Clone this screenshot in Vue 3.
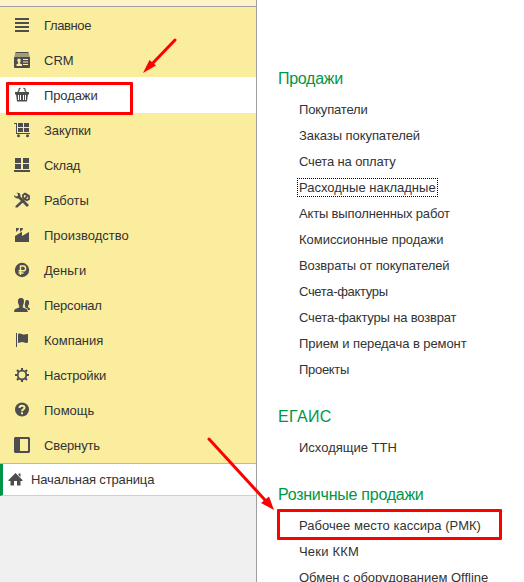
<script setup>
// track: letter spacing of each label, in px
const menu = [
  { icon: 'lines', label: 'Главное', track: -0.38 },
  { icon: 'crm', label: 'CRM', track: 0 },
  { icon: 'basket', label: 'Продажи', track: -0.1, active: true },
  { icon: 'cart', label: 'Закупки', track: -0.05 },
  { icon: 'stock', label: 'Склад', track: -0.3 },
  { icon: 'tools', label: 'Работы', track: -0.08 },
  { icon: 'factory', label: 'Производство', track: 0 },
  { icon: 'money', label: 'Деньги', track: 0.03 },
  { icon: 'people', label: 'Персонал', track: -0.25 },
  { icon: 'flag', label: 'Компания', track: -0.03 },
  { icon: 'gear', label: 'Настройки', track: -0.2 },
  { icon: 'help', label: 'Помощь', track: 0.03 },
  { icon: 'collapse', label: 'Свернуть', track: -0.13 }
]

const sections = [
  {
    title: 'Продажи',
    track: -0.28,
    items: [
      { label: 'Покупатели', track: -0.18 },
      { label: 'Заказы покупателей', track: -0.07 },
      { label: 'Счета на оплату', track: -0.15 },
      { label: 'Расходные накладные', track: 0, focused: true },
      { label: 'Акты выполненных работ', track: -0.16 },
      { label: 'Комиссионные продажи', track: -0.03 },
      { label: 'Возвраты от покупателей', track: -0.13 },
      { label: 'Счета-фактуры', track: -0.33 },
      { label: 'Счета-фактуры на возврат', track: -0.17 },
      { label: 'Прием и передача в ремонт', track: -0.07 },
      { label: 'Проекты', track: -0.3 }
    ]
  },
  { title: 'ЕГАИС', track: 0.35, items: [{ label: 'Исходящие ТТН', track: 0 }] },
  {
    title: 'Розничные продажи',
    track: -0.25,
    items: [
      { label: 'Рабочее место кассира (РМК)', track: 0.03 },
      { label: 'Чеки ККМ', track: 0.2 },
      { label: 'Обмен с оборудованием Offline', track: -0.02 }
    ]
  }
]
const spacing = (t) => ({ letterSpacing: t + 'px' })
</script>

<template>
  <div class="app">
    <aside class="side">
      <div class="strip"></div>
      <nav class="menu">
        <a v-for="m in menu" :key="m.label" class="item" :class="{ active: m.active }">
          <svg class="icon" viewBox="0 0 16 16" width="16" height="16">
            <path v-if="m.icon === 'lines'" d="M1 1h14v2H1zM1 5h14v2H1zM1 9h14v2H1zM1 13h14v2H1z" shape-rendering="crispEdges" />
            <g v-else-if="m.icon === 'crm'">
              <path d="M2 0h12l1 1v.5H1V1zM1 2.500h14l.6 1H.4zM1 4.500h14q1 0 1 1V15q0 1-1 1H1q-1 0-1-1V5.500q0-1 1-1z" />
              <path class="cut" d="M5 6.500c2.200 0 2 3 1 4v1l2 .8V14H2.500v-1.700l1.800-.8v-1c-1.200-1-1.500-4 .7-4zM9 7h5v1H9zM9 9.500h5v1H9zM9 12h5v1H9z" />
            </g>
            <g v-else-if="m.icon === 'basket'">
              <path d="M1 5h14v2.500H1zM2 7h12l-1 7.500H3z" />
              <path class="line" d="M3.500 5.500L5 3.500V2L6.500 1M12.500 5.500L11 3.500V2L9.500 1" />
              <path class="white-line" d="M4.500 8v5M6.500 8v5M9.500 8v5M11.500 8v5" />
            </g>
            <g v-else-if="m.icon === 'cart'">
              <path d="M4 1h5v4H4zM10 1h5v4h-5zM4 6h5v4H4zM10 6h5v4h-5z" shape-rendering="crispEdges" />
              <path d="M0 1h3v10h13v1H2V2H0z" shape-rendering="crispEdges" />
              <circle cx="4.500" cy="13.800" r="1.500" /><circle cx="13.500" cy="13.800" r="1.500" />
            </g>
            <path v-else-if="m.icon === 'stock'" d="M1 1h6v5H1zM9 1h6v5H9zM1 7h6v5H1zM9 7h6v5H9zM0 13h16v2H0z" shape-rendering="crispEdges" />
            <g v-else-if="m.icon === 'tools'">
              <path d="M0 3l2 1.500L3.800 4 4 2 2.500 1C5-.2 7 2 6.400 4.400L15 13l-2 2-8.500-8.600C2.500 7 0 5.500 0 3z" />
              <path d="M1.500 14L9 7l1.700 1.700L3.500 15.500H1.500z" />
              <path class="line thick" d="M9 5.500V3L11 1.500l1.800 1L15 4v3l-2 1.200-3-1.200zM12.500 2v3.200l-2 1.500" />
            </g>
            <path v-else-if="m.icon === 'factory'" d="M2 1h2.800v1.500L2 5zM6 1h2.800v1.500L6 5zM1 15V9l7-4.300V9l7-4v10z" />
            <g v-else-if="m.icon === 'money'">
              <circle cx="8" cy="8" r="7.200" />
              <path class="cut-line" d="M6.500 13V4h2.800q2.300 0 2.300 2.400T9.300 8.800H4.500M4.500 11h5" />
            </g>
            <g v-else-if="m.icon === 'people'">
              <path d="M7 1c3 0 3.300 2.500 2.800 5L8.800 9v1.500l4 1.600L14 15H0l.7-2.800L5.200 10.500V9L4.100 6C3.600 3.500 4 1 7 1z" />
              <path d="M13 3c2 0 2.500 2 2 4l-1 2v1.300l1.500.8.5 1.900h-2l-.6-1.500-2.300-1.300V9L10.700 7.500C11.500 5.500 10.700 3 13 3z" />
            </g>
            <path v-else-if="m.icon === 'flag'" d="M2 1h1v14H2zM4 2c3-1.500 4 .8 6 .6L14 2v8.500c-3 1.200-4-.7-6-.5L4 11z" />
            <g v-else-if="m.icon === 'gear'">
              <circle class="line thick" cx="8" cy="8" r="4.300" />
              <path class="teeth" d="M8 1V4M8 12v3M1 8h3M12 8h3M3 3l1.700 1.700M11.300 11.300L13 13M13 3l-1.700 1.700M4.700 11.300L3 13" />
            </g>
            <g v-else-if="m.icon === 'help'">
              <circle cx="8" cy="7.500" r="7" />
              <path class="cut-line thick" d="M5.500 6c0-3.200 5-3 5-.3C10.500 7.500 8 7.300 8 9.300" />
              <path class="cut" d="M7 10.300h2v1.900H7z" />
            </g>
            <path v-else d="M1 0h14l1 1v14l-1 1H1l-1-1V1zM6 2v12h8V2z" fill-rule="evenodd" />
          </svg>
          <span :style="spacing(m.track)">{{ m.label }}</span>
        </a>
      </nav>
      <div class="home">
        <svg class="icon" viewBox="0 0 16 16" width="16" height="16">
          <path d="M8.500 1L15.500 8v1h-2v4.500H10V9H7v4.500H3.500V9h-2V8zM11.500 1.500h2V5l-2-2z" />
        </svg>
        <span :style="spacing(-0.14)">Начальная страница</span>
      </div>
    </aside>
    <main class="content">
      <section v-for="s in sections" :key="s.title">
        <h2 :style="spacing(s.track)">{{ s.title }}</h2>
        <ul>
          <li v-for="t in s.items" :key="t.label">
            <span :class="{ focused: t.focused }" :style="spacing(t.track)">{{ t.label }}</span>
          </li>
        </ul>
      </section>
    </main>
    <div class="mark mark-menu"></div>
    <div class="mark mark-link"></div>
    <svg class="arrows" width="524" height="582" viewBox="0 0 524 582">
      <path d="M175 40L152 64M209 439L265 500" />
      <polygon points="143,73 149.500,60 156,65.500" />
      <polygon points="274,510 261,503 269,496.500" />
    </svg>
  </div>
</template>

<style>
body { margin: 0; }
</style>
<style scoped>
.app {
  position: relative;
  display: flex;
  width: 524px;
  height: 582px;
  overflow: hidden;
  background: #fff;
  color: #333;
  font: 13px/26px "Liberation Sans", Arial, sans-serif;
}
.side {
  box-sizing: border-box;
  flex: none;
  width: 257px;
  border-right: 1px solid #a0a0a0;
  background: #f0f0f0;
}
.strip { height: 6px; background: #fff2c8; border-bottom: 1px solid #a0a0a0; }
.menu { height: 456px; background: #fbed9e; border-bottom: 1px solid #c5bb83; }
.item {
  display: flex;
  align-items: center;
  gap: 14px;
  height: 35px;
  padding-left: 14px;
}
.item span { padding-top: 2px; }
.active { background: #fff; box-shadow: 0 1px #fff; }
.icon { flex: none; display: block; fill: #4d4d4d; }
.line { fill: none; stroke: #4d4d4d; stroke-width: 1.2; }
.thick { stroke-width: 1.8; }
.teeth { stroke: #4d4d4d; stroke-width: 2.1; }
.cut { fill: #fbed9e; }
.cut-line { fill: none; stroke: #fbed9e; stroke-width: 1.4; }
.cut-line.thick { stroke-width: 2; }
.white-line { stroke: #fff; stroke-width: 1; }
.home {
  display: flex;
  align-items: center;
  gap: 8px;
  height: 31px;
  padding-left: 4px;
  background: #fff;
  border-bottom: 1px solid #d0d0d0;
  border-left: 3px solid #009646;
}
.content { flex: 1; padding: 66px 0 0 21px; white-space: nowrap; }
h2 {
  margin: 0 0 6px;
  height: 25px;
  color: #009646;
  font-size: 16px;
  font-weight: 400;
  line-height: 25px;
}
ul { margin: 0 0 21px; padding: 0 0 0 21px; list-style: none; }
li { height: 26px; }
.focused { outline: 1px dotted #000; outline-offset: 1px; }
.mark { position: absolute; box-sizing: border-box; border: 3px solid #f00; border-radius: 1px; }
.mark-menu { left: 6px; top: 82px; width: 127px; height: 33px; }
.mark-link { left: 277px; top: 509px; width: 225px; height: 31px; }
.arrows { position: absolute; left: 0; top: 0; fill: #f00; }
.arrows path { stroke: #f00; stroke-width: 3; stroke-linecap: round; }
</style>
